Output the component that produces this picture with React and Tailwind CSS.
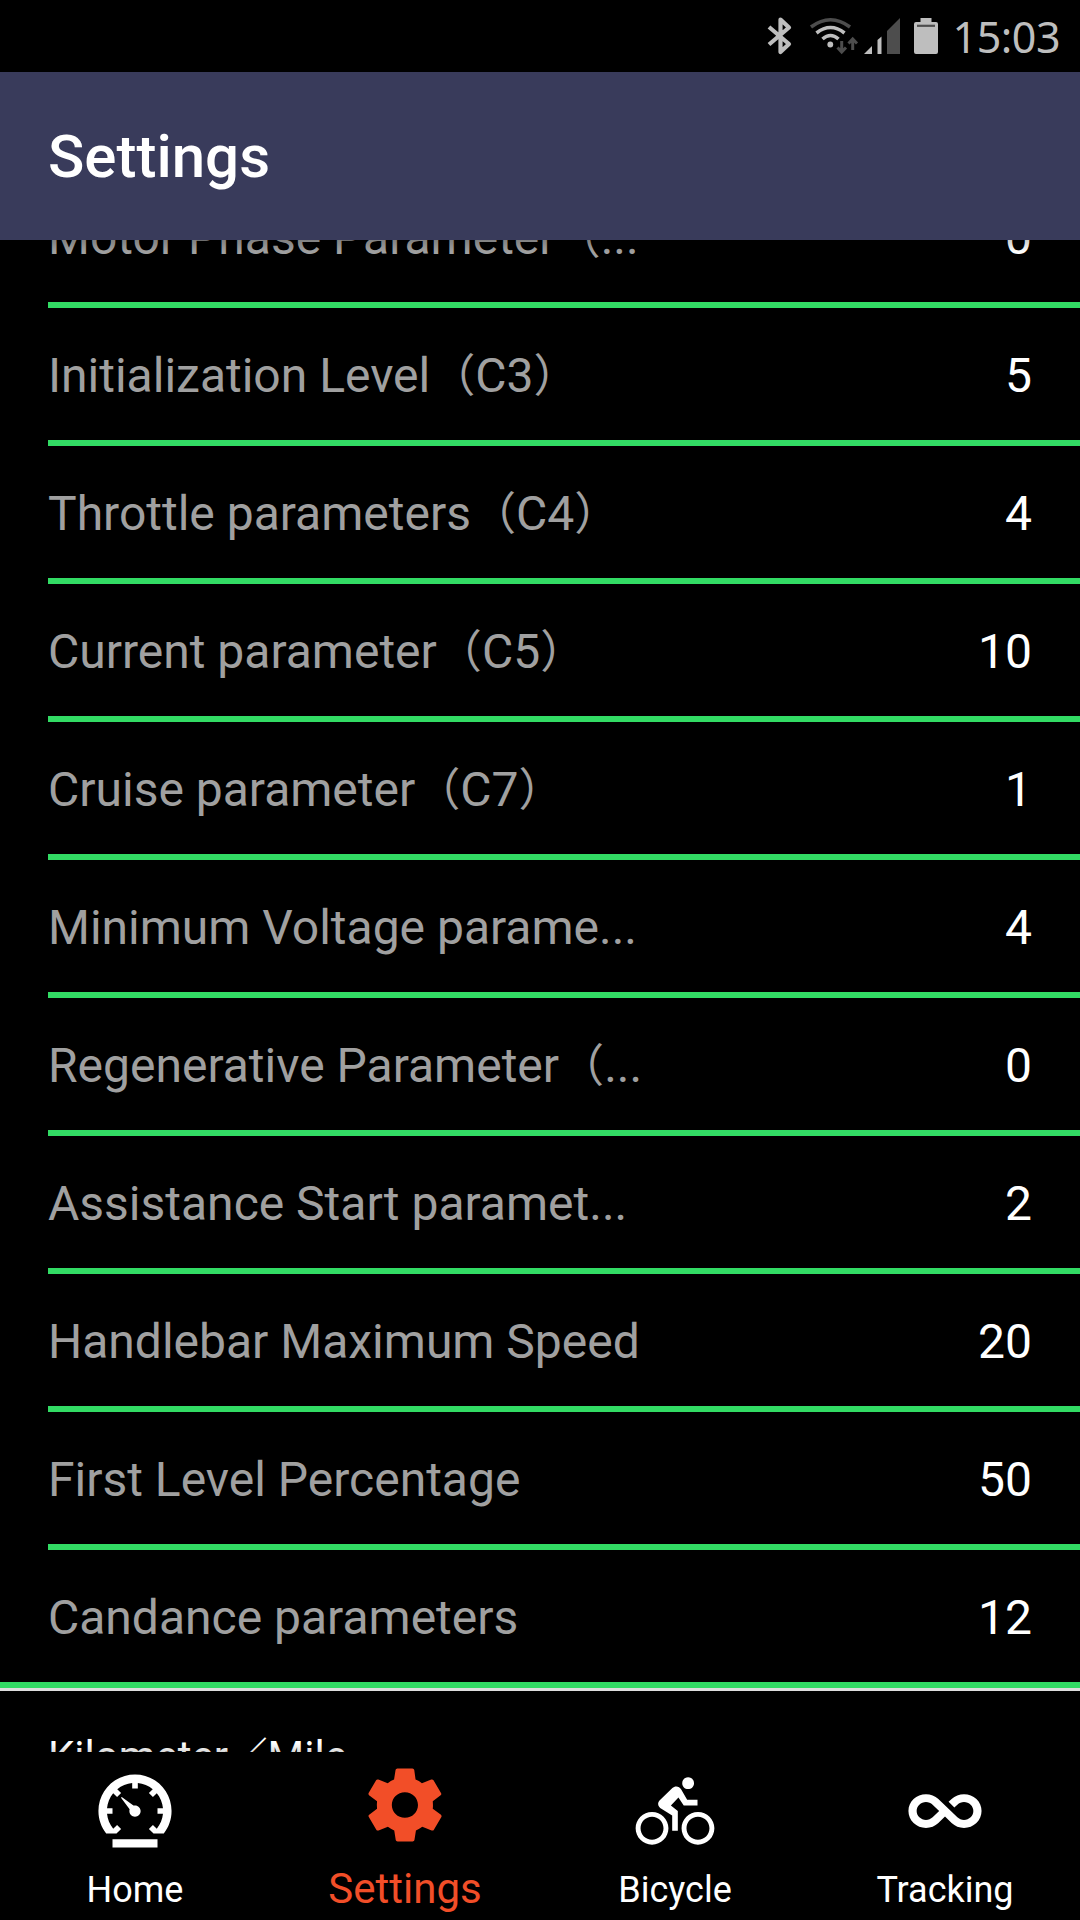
import React from 'react';
import { IoMdBicycle, IoMdInfinite, IoMdSettings, IoMdSpeedometer } from 'react-icons/io';

const parameters = [
  { label: 'Motor Phase Parameter（...', value: 0 },
  { label: 'Initialization Level（C3）', value: 5 },
  { label: 'Throttle parameters（C4）', value: 4 },
  { label: 'Current parameter（C5）', value: 10 },
  { label: 'Cruise parameter（C7）', value: 1 },
  { label: 'Minimum Voltage parame...', value: 4 },
  { label: 'Regenerative Parameter（...', value: 0 },
  { label: 'Assistance Start paramet...', value: 2 },
  { label: 'Handlebar Maximum Speed', value: 20 },
  { label: 'First Level Percentage', value: 50 },
  { label: 'Candance parameters', value: 12 },
];

const tabs = [
  { label: 'Home', icon: IoMdSpeedometer },
  { label: 'Settings', icon: IoMdSettings, active: true },
  { label: 'Bicycle', icon: IoMdBicycle },
  { label: 'Tracking', icon: IoMdInfinite },
];

// full-width punctuation is set a little smaller than the latin text
const Label = ({ text }) =>
  text.split(/([（）／])/).map((part, i) =>
    /[（）／]/.test(part) ? (
      <span key={i} className="text-[0.94em] leading-none">
        {part}
      </span>
    ) : (
      part
    )
  );

const StatusBar = () => (
  <div className="flex h-[72px] shrink-0 items-center justify-end pr-[20px] text-[#bebebe]">
    <svg className="h-[72px] w-[200px]" viewBox="740 0 200 72" fill="none">
      {/* bluetooth */}
      <path
        d="M769 27 L789 44 L780.5 52 V19.5 L789 27.5 L769 44.5"
        stroke="currentColor"
        strokeWidth="4.2"
        strokeLinejoin="round"
      />
      {/* wifi */}
      <path d="M811 27 Q830.5 12.5 850 27" stroke="#4d4d4d" strokeWidth="3.6" />
      <path d="M816.5 33 Q830.5 22 844.5 33" stroke="currentColor" strokeWidth="3.6" />
      <path d="M822.5 39 Q830.5 32 838.5 39" stroke="currentColor" strokeWidth="3.6" />
      <circle cx="830.3" cy="44.5" r="2.9" fill="currentColor" />
      <path
        d="M841.7 41 V52 M837.5 47.5 L841.7 52 L846 47.5 M852.7 50 V39 M848.5 43.5 L852.7 39 L857 43.5"
        stroke="#4d4d4d"
        strokeWidth="3"
      />
      {/* signal */}
      <path d="M864 54 L872 46 V54 Z" fill="currentColor" />
      <path d="M877.5 40 L881.5 36.5 V54 H877.5 Z" fill="currentColor" />
      <path d="M887 31 L900 18 V54 H887 Z" fill="#4d4d4d" />
      {/* battery */}
      <path
        d="M920.5 18 H931.5 V22 H936 Q938 22 938 24 V52 Q938 54 936 54 H916 Q914 54 914 52 V24 Q914 22 916 22 H920.5 Z"
        fill="currentColor"
      />
      <path d="M917 25.8 H935" stroke="#4d4d4d" strokeWidth="2.2" />
    </svg>
    <span className="ml-[13px] font-['Noto_Sans','Open_Sans',sans-serif] text-[43px] leading-none tracking-[-0.5px]">
      15:03
    </span>
  </div>
);

const ParameterRow = ({ label, value, last }) => (
  <li className={last ? 'border-b-[6px] border-[#32db64] pl-12' : 'pl-12'}>
    <div
      className={
        last
          ? 'flex h-[132px] items-center justify-between pt-[4px] pr-12'
          : 'flex h-[138px] items-center justify-between border-b-[6px] border-[#32db64] pt-[4px] pr-12'
      }
    >
      <span className="whitespace-nowrap text-[#a0a0a0]">
        <Label text={label} />
      </span>
      <span>{value}</span>
    </div>
  </li>
);

const TabButton = ({ label, icon: Icon, active }) => (
  <button
    className={
      active
        ? 'flex flex-1 flex-col items-center pt-[8px] text-[42px] text-[#f24e28]'
        : 'flex flex-1 flex-col items-center pt-[14px] text-[36px]'
    }
  >
    <Icon className="size-[90px]" />
    <span className={active ? 'mt-[14px] leading-[50px]' : 'mt-[13px] leading-[42px]'}>{label}</span>
  </button>
);

export default function App() {
  return (
    <div className="flex h-[1920px] w-[1080px] flex-col overflow-hidden bg-black font-['Roboto','Noto_Sans_CJK_SC',sans-serif] text-white">
      <StatusBar />
      <header className="flex h-[168px] shrink-0 items-center bg-[#393b5b] px-12 pt-[2px]">
        <h1 className="text-[60px] font-medium leading-none">Settings</h1>
      </header>

      {/* list is scrolled, so the first and last rows are cut off */}
      <main className="relative min-h-0 flex-1 overflow-hidden">
        <ul className="-mt-[70px] text-[48px]">
          {parameters.map((item, i) => (
            <ParameterRow key={item.label} {...item} last={i === parameters.length - 1} />
          ))}
        </ul>
        <div className="border-t-[3px] border-[#dedede] px-12 pt-[39px] text-[42px] leading-[54px]">
          <Label text="Kilometer／Mile" />
        </div>
        {/* toolbar and tab bar shadows */}
        <div className="absolute inset-x-0 top-0 h-[12px] bg-gradient-to-b from-black/20 to-transparent" />
        <div className="absolute inset-x-0 bottom-0 h-[9px] bg-gradient-to-t from-black/15 to-transparent" />
      </main>

      <nav className="flex h-[168px] shrink-0 bg-black">
        {tabs.map((tab) => (
          <TabButton key={tab.label} {...tab} />
        ))}
      </nav>
    </div>
  );
}
